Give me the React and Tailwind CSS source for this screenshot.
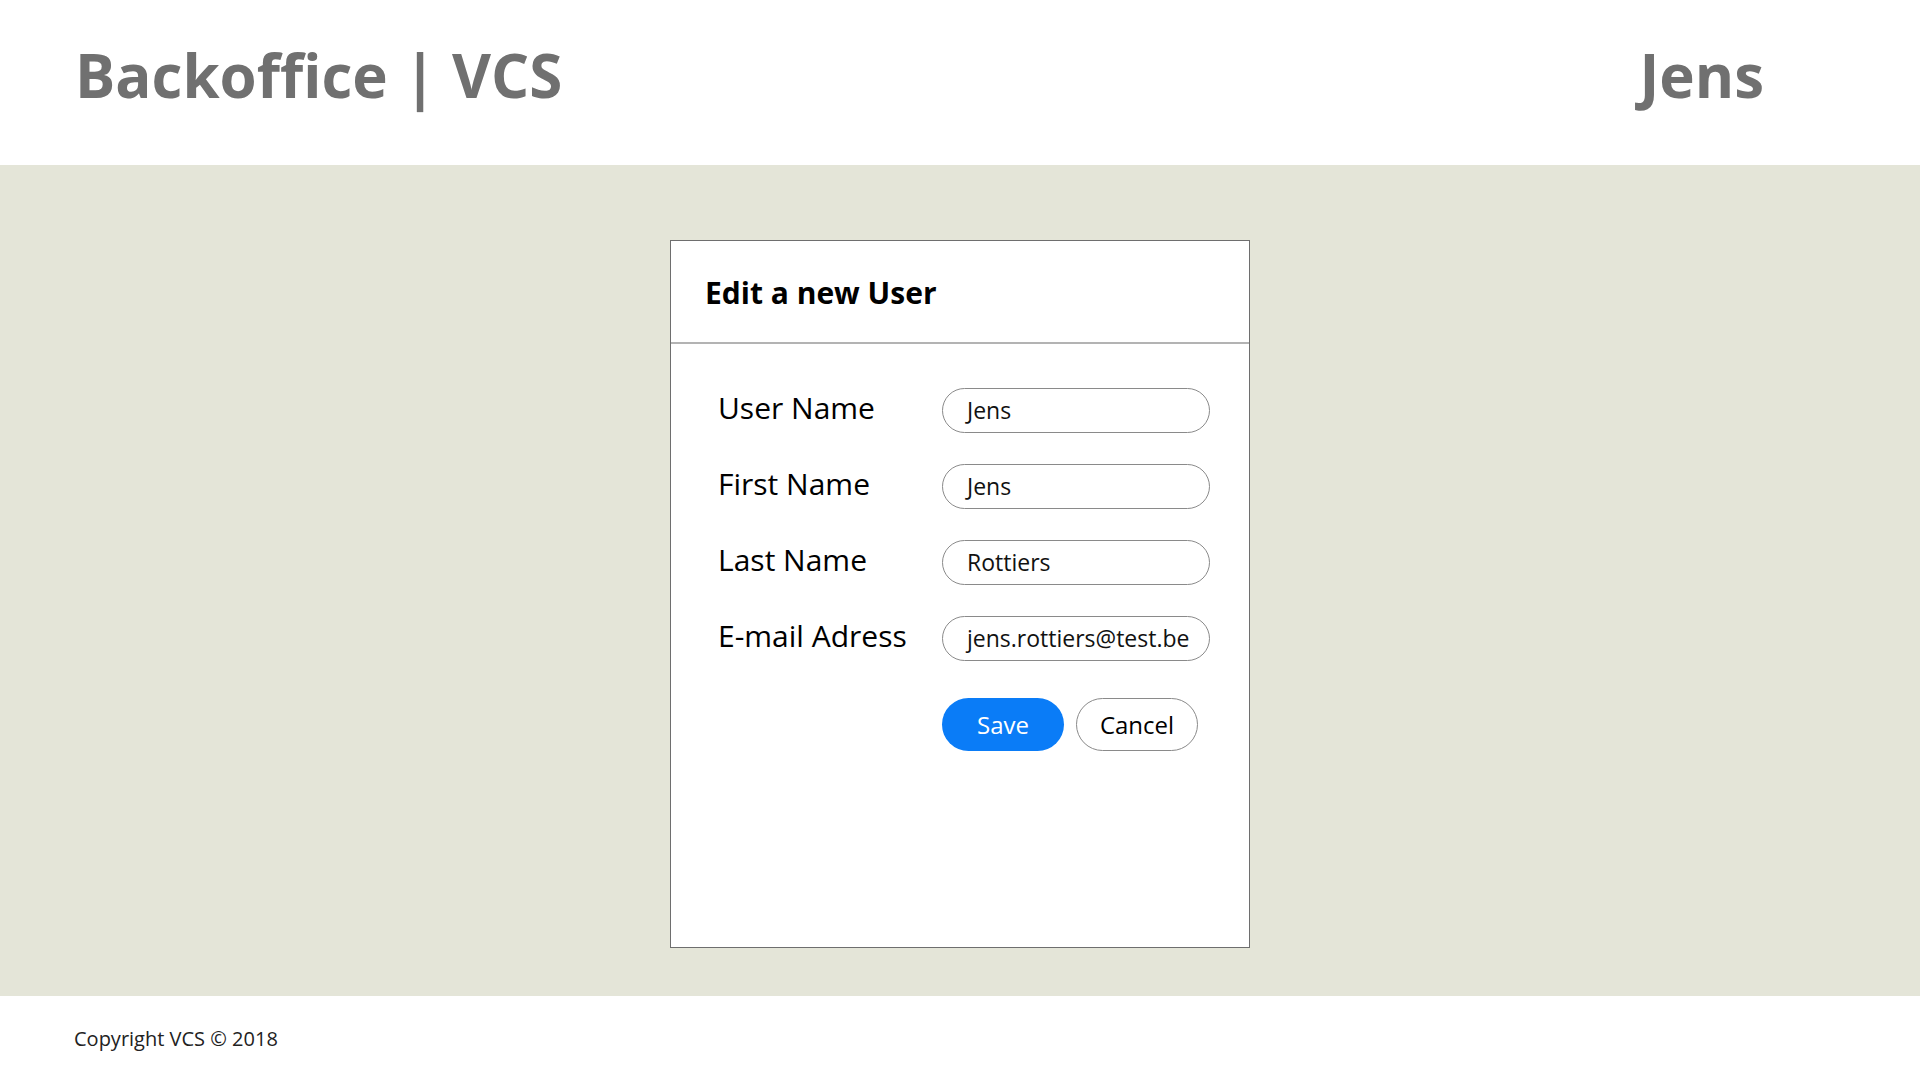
import React from "react";

const font = { fontFamily: '"Open Sans", "Noto Sans", sans-serif' };

function Field({ label, value }) {
  return (
    <div className="flex items-center h-[45px]">
      <div className="w-[224px] text-[30px] text-black leading-none pb-[6px]">{label}</div>
      <div className="w-[268px] h-[45px] rounded-full border border-[#8a8a8a] flex items-center pl-[24px] text-[23px] text-[#111] whitespace-nowrap overflow-hidden">
        {value}
      </div>
    </div>
  );
}

export default function App() {
  return (
    <div className="min-h-screen h-[1080px] flex flex-col bg-white" style={font}>
      <header className="h-[165px] shrink-0 flex items-center justify-between pl-[75px] pr-[156px] pb-[16px]">
        <div className="text-[60px] font-bold text-[#707070] leading-none">Backoffice&nbsp;|&nbsp;VCS</div>
        <div className="text-[60px] font-bold text-[#707070] leading-none">Jens</div>
      </header>
      <main className="flex-1 bg-[#e4e5d8] flex justify-center pt-[75px]">
        <div className="w-[580px] h-[708px] bg-white border border-[#6e6e6e] flex flex-col">
          <div className="h-[103px] border-b-2 border-[#b3b3b3] flex items-center pl-[34px] pt-[2px]">
            <h2 className="text-[30px] font-bold text-black leading-none">Edit a new User</h2>
          </div>
          <div className="pl-[47px] pt-[44px] flex flex-col gap-[31px]">
            <Field label="User Name" value="Jens" />
            <Field label="First Name" value="Jens" />
            <Field label="Last Name" value="Rottiers" />
            <Field label="E-mail Adress" value="jens.rottiers@test.be" />
            <div className="flex pl-[224px] gap-[12px] mt-[6px]">
              <button className="w-[122px] h-[53px] rounded-full bg-[#0a7cf7] text-white text-[24px] leading-none">Save</button>
              <button className="w-[122px] h-[53px] rounded-full border border-[#8a8a8a] bg-white text-black text-[24px] leading-none">Cancel</button>
            </div>
          </div>
        </div>
      </main>
      <footer className="h-[84px] shrink-0 flex items-center pl-[74px] pt-[2px]">
        <span className="text-[20px] text-[#222]">Copyright VCS © 2018</span>
      </footer>
    </div>
  );
}
